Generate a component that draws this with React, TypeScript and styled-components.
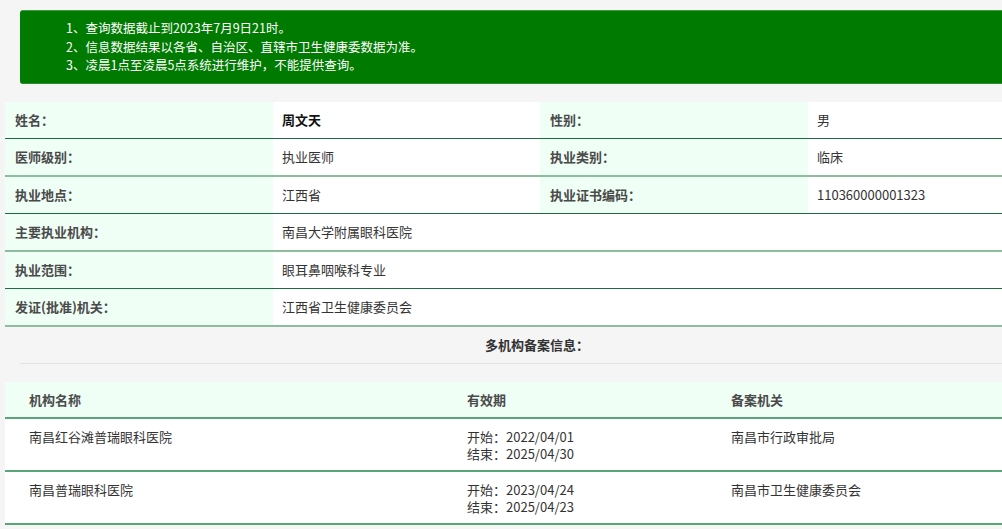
import React from "react";
import styled, { createGlobalStyle } from "styled-components";

const Global = createGlobalStyle`
  html, body { margin: 0; padding: 0; background: #f5f5f5; overflow: hidden; }
  body { font-family: "Noto Sans CJK SC", "Noto Sans", sans-serif; font-size: 13px; color: #333; }
`;

const Page = styled.div`
  width: 1064px;
  padding: 10px 0 0 5px;
`;

const Notice = styled.div`
  margin-left: 15px;
  background: #007a00;
  border-top: 1px solid #3f9a3f;
  border-bottom: 1px solid #2f8a2f;
  border-radius: 3px 0 0 3px;
  padding: 8px 0 8px 46px;
  color: #fff;
  line-height: 18.5px;
  font-size: 12.5px;
`;

const InfoTable = styled.div`
  margin-top: 18px;
  display: grid;
  grid-template-columns: 268px 267px 268px 261px;
`;

const Cell = styled.div<{ $label?: boolean; $strong?: boolean; $light?: boolean }>`
  height: 37.5px;
  box-sizing: border-box;
  display: flex;
  align-items: center;
  padding-left: ${(p) => (p.$label ? "10px" : "9px")};
  background: ${(p) => (p.$label ? "#effff6" : "#fff")};
  border-bottom: ${(p) => (p.$light ? "2px solid #8dbd9e" : "1px solid #1c6e40")};
  font-weight: ${(p) => (p.$label || p.$strong ? 700 : 400)};
  color: ${(p) => (p.$label ? "#4a4a4a" : p.$strong ? "#111" : "#333")};
`;

const WideValue = styled(Cell)`
  grid-column: span 3;
`;

const SectionTitle = styled.div`
  margin: 0 15px;
  height: 36px;
  display: flex;
  align-items: center;
  justify-content: center;
  font-weight: 700;
  color: #333;
  border-bottom: 1px solid #e3e3e3;
`;

const OrgTable = styled.div`
  margin-top: 18px;
  display: grid;
  grid-template-columns: 438px 264px 362px;
`;

const HeadCell = styled.div`
  height: 37px;
  box-sizing: border-box;
  background: #effff6;
  border-bottom: 2px solid #5aa47a;
  display: flex;
  align-items: center;
  padding-left: 24px;
  font-weight: 700;
  color: #4a4a4a;
`;

const BodyCell = styled.div`
  height: 53px;
  box-sizing: border-box;
  background: #fff;
  border-bottom: 2px solid #5aa47a;
  padding: 9px 0 0 24px;
  line-height: 17px;
  color: #333;
`;

export default function App() {
  return (
    <>
      <Global />
      <Page>
        <Notice>
          <div>1、查询数据截止到2023年7月9日21时。</div>
          <div>2、信息数据结果以各省、自治区、直辖市卫生健康委数据为准。</div>
          <div>3、凌晨1点至凌晨5点系统进行维护，不能提供查询。</div>
        </Notice>
        <InfoTable>
          <Cell $label>姓名：</Cell>
          <Cell $strong>周文天</Cell>
          <Cell $label>性别：</Cell>
          <Cell>男</Cell>

          <Cell $label $light>医师级别：</Cell>
          <Cell $light>执业医师</Cell>
          <Cell $label $light>执业类别：</Cell>
          <Cell $light>临床</Cell>

          <Cell $label>执业地点：</Cell>
          <Cell>江西省</Cell>
          <Cell $label>执业证书编码：</Cell>
          <Cell>110360000001323</Cell>

          <Cell $label $light>主要执业机构：</Cell>
          <WideValue $light>南昌大学附属眼科医院</WideValue>

          <Cell $label>执业范围：</Cell>
          <WideValue>眼耳鼻咽喉科专业</WideValue>

          <Cell $label $light>发证(批准)机关：</Cell>
          <WideValue $light>江西省卫生健康委员会</WideValue>
        </InfoTable>
        <SectionTitle>多机构备案信息：</SectionTitle>
        <OrgTable>
          <HeadCell>机构名称</HeadCell>
          <HeadCell>有效期</HeadCell>
          <HeadCell>备案机关</HeadCell>

          <BodyCell>南昌红谷滩普瑞眼科医院</BodyCell>
          <BodyCell>
            <div>开始：2022/04/01</div>
            <div>结束：2025/04/30</div>
          </BodyCell>
          <BodyCell>南昌市行政审批局</BodyCell>

          <BodyCell>南昌普瑞眼科医院</BodyCell>
          <BodyCell>
            <div>开始：2023/04/24</div>
            <div>结束：2025/04/23</div>
          </BodyCell>
          <BodyCell>南昌市卫生健康委员会</BodyCell>
        </OrgTable>
      </Page>
    </>
  );
}
